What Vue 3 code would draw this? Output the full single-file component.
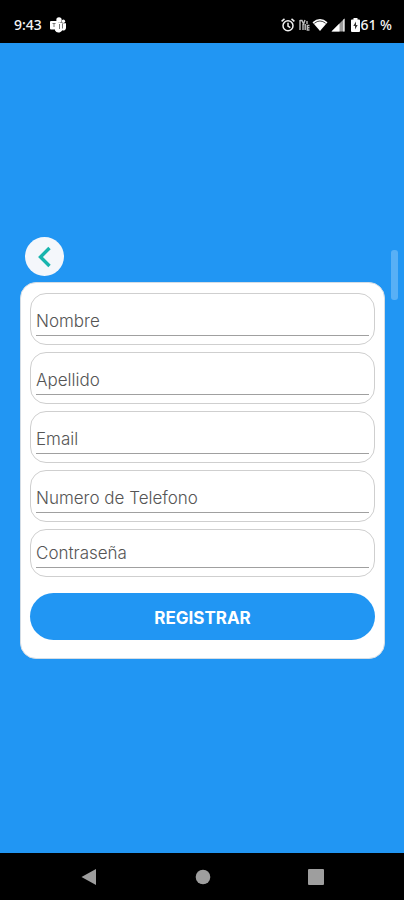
<script setup>
import { reactive } from 'vue'

const fields = [
  { id: 'nombre', label: 'Nombre', type: 'text' },
  { id: 'apellido', label: 'Apellido', type: 'text' },
  { id: 'email', label: 'Email', type: 'email' },
  { id: 'telefono', label: 'Numero de Telefono', type: 'tel' },
  { id: 'contrasena', label: 'Contraseña', type: 'password' }
]
const form = reactive({ nombre: '', apellido: '', email: '', telefono: '', contrasena: '' })
</script>

<template>
  <div class="screen">
    <header class="status">
      <div class="group">
        <span>9:43</span>
        <svg width="16" height="16" viewBox="0 0 16 16" fill="#fff" aria-hidden="true">
          <circle cx="9" cy="3" r="2.700" />
          <circle cx="13.400" cy="4.200" r="1.700" />
          <path d="M5 5.500h7.500v6a4 4 0 0 1-7.500 2z" />
          <path d="M12 6.200h4V11a2.500 2.500 0 0 1-4 2z" />
          <rect x="0" y="4" width="8" height="8.500" rx="1" />
          <path d="M2.500 6.500h3M4 6.500v3.500" stroke="#777" stroke-width="1" />
          <path d="M9.500 7v5M12.500 6.500v5" stroke="#555" stroke-width="0.800" fill="none" />
        </svg>
      </div>
      <div class="group right">
        <svg class="alarm" width="14" height="14" viewBox="0 0 14 14" fill="none" stroke="#f2f2f2" stroke-width="1.500" aria-hidden="true">
          <circle cx="7" cy="7.700" r="5" />
          <path d="M.6 3.400 3.500.9M13.400 3.400 10.500.9M7 4.800v3.300l2.300 1.500" />
        </svg>
        <svg class="volte" width="11" height="14" viewBox="0 0 11 14" fill="none" stroke="#bdbdbd" stroke-width="1.400" aria-hidden="true">
          <path d="M1 2v10M1 2.500h2L4.500 6 6 2M4 6v6M6.200 6v6M8 3v3M10.500 7.500H8.300v4.500h2.200M8.300 9.700h2.200" />
        </svg>
        <svg width="16" height="14" viewBox="0 0 16 14" aria-hidden="true">
          <path d="M.5 4.300Q8-2.400 15.500 4.300L8 13z" fill="#fff" />
          <path d="M2.300 5.300Q8 .7 13.700 5.300" fill="none" stroke="#333" stroke-width="0.900" />
        </svg>
        <svg class="signal" width="14" height="14" viewBox="0 0 14 14" aria-hidden="true">
          <path d="M.5 13.500 13.500.5v13z" fill="#999" />
          <path d="M.5 13.500 8.500 5.500v8zM12.300 1.700l1.200-1.200v13h-1.200z" fill="#fff" />
        </svg>
        <svg width="9" height="14" viewBox="0 0 9 14" aria-hidden="true">
          <path d="M2.500 0h4v1.500H8q1 0 1 1V13q0 1-1 1H1q-1 0-1-1V2.500q0-1 1-1h1.500z" fill="#fff" />
          <path d="M5 3.500 2.300 8H4v3.500L6.700 7H5z" fill="#333" />
        </svg>
        <span>61 %</span>
      </div>
    </header>

    <main class="content">
      <button class="back" type="button" aria-label="Volver">
        <svg width="39" height="39" viewBox="0 0 39 39" fill="none" aria-hidden="true">
          <path d="M24.500 11 15.500 20 24.500 29" stroke="#18b5ae" stroke-width="3.400" />
        </svg>
      </button>
      <form class="card" @submit.prevent>
        <div v-for="field in fields" :key="field.id" class="field">
          <input :id="field.id" v-model="form[field.id]" :type="field.type" :placeholder="field.label" :aria-label="field.label" />
        </div>
        <button class="submit" type="submit">REGISTRAR</button>
      </form>
      <div class="thumb" aria-hidden="true"></div>
    </main>

    <nav class="navbar">
      <button type="button" aria-label="Atrás">
        <svg width="18" height="18" viewBox="0 0 18 18" aria-hidden="true"><path d="M1.500 9 16 1v16z" fill="#9e9e9e" /></svg>
      </button>
      <button type="button" aria-label="Inicio">
        <svg width="18" height="18" viewBox="0 0 18 18" aria-hidden="true"><circle cx="9" cy="9" r="7.300" fill="#9e9e9e" /></svg>
      </button>
      <button type="button" aria-label="Recientes">
        <svg width="18" height="18" viewBox="0 0 18 18" aria-hidden="true"><rect x="1" y="1" width="16" height="16" rx="1" fill="#9e9e9e" /></svg>
      </button>
    </nav>
  </div>
</template>

<style>
body {
  margin: 0;
}
</style>

<style scoped>
.screen {
  display: flex;
  flex-direction: column;
  min-height: 100vh;
  background: #2196f3;
  font-family: Inter, "Open Sans", sans-serif;
}

button {
  display: block;
  padding: 0;
  border: 0;
  background: none;
  font-family: inherit;
}

svg {
  display: block;
}

.status {
  display: flex;
  align-items: center;
  justify-content: space-between;
  box-sizing: border-box;
  height: 43px;
  padding: 7px 12px 0 14px;
  background: #000;
  color: #f5f5f5;
  font-family: "Noto Sans", sans-serif;
  font-size: 14px;
  font-weight: 500;
  line-height: 18px;
}

.group {
  display: flex;
  align-items: center;
  gap: 8px;
}

.right {
  gap: 0;
}

.alarm {
  margin-right: 4px;
}

.volte {
  margin-right: 2px;
}

.signal {
  margin: 0 6px 0 3px;
}

.content {
  position: relative;
  flex: 1;
  display: flex;
  flex-direction: column;
  justify-content: center;
  gap: 6px;
  padding: 0 19px 0 20px;
}

.back {
  width: 39px;
  height: 39px;
  margin-left: 5px;
  border-radius: 50%;
  background: #f4f7fb;
}

.card {
  display: flex;
  flex-direction: column;
  gap: 7px;
  padding: 10px 9px 18px;
  border: 1px solid #d5dde5;
  border-radius: 16px;
  background: #fff;
}

.field {
  display: flex;
  align-items: flex-end;
  box-sizing: border-box;
  height: 52px;
  padding: 0 5px 8px;
  border: 1px solid #cfcfcf;
  border-radius: 16px;
}

.field:nth-child(5) {
  height: 48px;
}

input {
  box-sizing: border-box;
  width: 100%;
  height: 32px;
  padding: 2px 0 0;
  border: 0;
  border-bottom: 1px solid #a0a0a0;
  border-radius: 0;
  outline: 0;
  background: transparent;
  color: #444;
  font-family: inherit;
  font-size: 17px;
  font-weight: 300;
}

input::placeholder {
  color: #555;
  opacity: 1;
}

.submit {
  height: 47px;
  margin-top: 9px;
  padding-top: 2px;
  border-radius: 24px;
  background: #2196f3;
  color: #fff;
  font-size: 17px;
  font-weight: 700;
}

.thumb {
  position: absolute;
  top: 207px;
  right: 6px;
  width: 7px;
  height: 50px;
  border-radius: 3px;
  background: rgba(255, 255, 255, 0.25);
}

.navbar {
  display: flex;
  align-items: center;
  justify-content: space-between;
  box-sizing: border-box;
  height: 47px;
  padding: 0 79px 0 80px;
  background: #000;
}
</style>
